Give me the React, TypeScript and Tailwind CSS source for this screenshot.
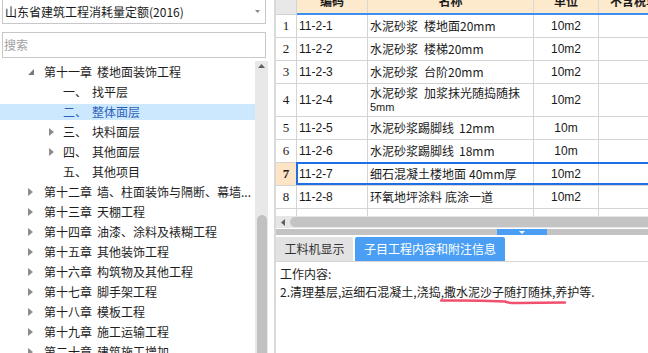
const cjk = "font-['Noto_Sans_CJK_SC','Noto_Sans',sans-serif]"

type TreeItem = {
    child?: boolean
    arrow?: "open" | "closed"
    head: string
    tail: string
    selected?: boolean
}

const treeItems: TreeItem[] = [
    { arrow: "open", head: "第十一章", tail: "楼地面装饰工程" },
    { child: true, head: "一、", tail: "找平层" },
    { child: true, head: "二、", tail: "整体面层", selected: true },
    { child: true, arrow: "closed", head: "三、", tail: "块料面层" },
    { child: true, arrow: "closed", head: "四、", tail: "其他面层" },
    { child: true, head: "五、", tail: "其他项目" },
    { arrow: "closed", head: "第十二章", tail: "墙、柱面装饰与隔断、幕墙..." },
    { arrow: "closed", head: "第十三章", tail: "天棚工程" },
    { arrow: "closed", head: "第十四章", tail: "油漆、涂料及裱糊工程" },
    { arrow: "closed", head: "第十五章", tail: "其他装饰工程" },
    { arrow: "closed", head: "第十六章", tail: "构筑物及其他工程" },
    { arrow: "closed", head: "第十七章", tail: "脚手架工程" },
    { arrow: "closed", head: "第十八章", tail: "模板工程" },
    { arrow: "closed", head: "第十九章", tail: "施工运输工程" },
    { arrow: "closed", head: "第二十章", tail: "建筑施工增加" },
]

type Row = { n: number; code: string; name: string; gap?: number; rest?: string; unit: string; tall?: boolean }

const rows: Row[] = [
    { n: 1, code: "11-2-1", name: "水泥砂浆", gap: 6, rest: "楼地面20mm", unit: "10m2" },
    { n: 2, code: "11-2-2", name: "水泥砂浆", gap: 6, rest: "楼梯20mm", unit: "10m2" },
    { n: 3, code: "11-2-3", name: "水泥砂浆", gap: 6, rest: "台阶20mm", unit: "10m2" },
    { n: 4, code: "11-2-4", name: "水泥砂浆", gap: 6, rest: "加浆抹光随捣随抹", unit: "10m2", tall: true },
    { n: 5, code: "11-2-5", name: "水泥砂浆踢脚线", gap: 5, rest: "12mm", unit: "10m" },
    { n: 6, code: "11-2-6", name: "水泥砂浆踢脚线", gap: 5, rest: "18mm", unit: "10m" },
    { n: 7, code: "11-2-7", name: "细石混凝土楼地面", gap: 3, rest: "40mm厚", unit: "10m2" },
    { n: 8, code: "11-2-8", name: "环氧地坪涂料", gap: 3, rest: "底涂一道", unit: "10m2" },
    { n: 9, code: "11-2-9", name: "环氧地坪涂料", gap: 3, rest: "面涂二道", unit: "10m2" },
]

const TreeRow = ({ item }: { item: TreeItem }) => (
    <div className="h-[20px] flex items-center">
        <div className={`flex items-center w-full h-[16px] ${item.selected ? "bg-[#cce8ff] text-[#2b62b8]" : "text-[#1e1e1e]"}`}>
            <div className={`${item.child ? "w-[63px] pl-[49px]" : "w-[44px] pl-[28px]"} flex items-center shrink-0`}>
                {item.arrow === "open" && (
                    <svg width="6" height="6" viewBox="0 0 6 6"><polygon points="6,0 6,6 0,6" fill="#7a7a7a" /></svg>
                )}
                {item.arrow === "closed" && (
                    <svg width="5" height="8" viewBox="0 0 5 8"><polygon points="0,0 5,4 0,8" fill="#8c8c8c" /></svg>
                )}
            </div>
            <span className="whitespace-nowrap">{item.head}</span>
            <span className="whitespace-nowrap ml-[5px]">{item.tail}</span>
        </div>
    </div>
)

const TableRow = ({ row }: { row: Row }) => {
    const sel = row.n === 7
    const cut = row.n === 9 ? "pt-[5px]" : ""
    return (
        <div className={`relative flex border-b border-[#d4d4d4] ${row.tall ? "h-[33px]" : "h-[23px]"}`}>
            <div className={`w-[21px] shrink-0 border-r border-[#d4d4d4] flex items-center justify-center font-['Liberation_Serif',serif] text-[13px] ${cut} ${sel ? "bg-[#fde4c4] font-bold" : ""}`}>
                {row.n}
            </div>
            <div className={`w-[71px] shrink-0 border-r border-[#d4d4d4] flex items-center pl-[2px] font-['Liberation_Sans',sans-serif] text-[12px] ${cut}`}>
                {row.code}
            </div>
            <div className={`w-[166px] shrink-0 border-r border-[#d4d4d4] flex items-center pl-[2px] text-[12px] ${cut}`}>
                {row.tall ? (
                    <div className="leading-[15px]">
                        <div>
                            {row.name}
                            <span style={{ marginLeft: row.gap }}>{row.rest}</span>
                        </div>
                        <div className="text-[11px] font-['Liberation_Sans',sans-serif]">5mm</div>
                    </div>
                ) : (
                    <div className="whitespace-nowrap">
                        {row.name}
                        <span style={{ marginLeft: row.gap }}>{row.rest}</span>
                    </div>
                )}
            </div>
            <div className={`w-[65px] shrink-0 border-r border-[#d4d4d4] flex items-center justify-center font-['Liberation_Sans',sans-serif] text-[12px] ${cut}`}>
                {row.unit}
            </div>
            <div className="flex-1" />
            {sel && <div className="absolute left-[20px] -top-px -right-[2px] bottom-0 border-2 border-[#1e6ee6]" />}
        </div>
    )
}

export default function App() {
    return (
        <div className={`w-[648px] h-[353px] flex overflow-hidden bg-white text-[12px] text-[#1a1a1a] ${cjk}`}>
            {/* left: quota library tree */}
            <div className="w-[268px] shrink-0 flex flex-col">
                <div className="mx-[2px] h-[24px] border border-t-0 border-[#c8c8c8] flex items-center pl-[2px] pr-[5px]">
                    <span className="whitespace-nowrap">山东省建筑工程消耗量定额(2016)</span>
                    <svg className="ml-auto" width="5" height="3" viewBox="0 0 5 3"><polygon points="0,0 5,0 2.5,3" fill="#8a8a8a" /></svg>
                </div>
                <div className="mx-[2px] mt-[8px] h-[26px] border border-[#c8c8c8] flex items-center pl-[1px] text-[#a0a0a0]">
                    搜索
                </div>
                <div className="mt-[3px] flex flex-1 min-h-0">
                    <div className="w-[255px] pt-px overflow-hidden">
                        {treeItems.map((item) => (
                            <TreeRow key={item.head + item.tail} item={item} />
                        ))}
                    </div>
                    <div className="w-[13px] bg-[#e8e8e8] flex flex-col items-center justify-between">
                        <svg className="mt-[3px]" width="7" height="4" viewBox="0 0 7 4"><polygon points="3.5,0 7,4 0,4" fill="#606060" /></svg>
                        <div className="w-[10px] h-[138px] rounded-t-full bg-[#c1c1c1]" />
                    </div>
                </div>
            </div>

            <div className="w-[6px] shrink-0" />

            {/* right: item table + details */}
            <div className="flex-1 flex flex-col border-l-2 border-[#d9d9d9] min-w-0">
                <div className="h-[216px] overflow-hidden">
                    <div className="flex h-[15px]">
                        <div className="w-[21px] shrink-0 bg-[#e8e8e8] border-r border-b border-[#d4d4d4]" />
                        <div className="flex flex-1 bg-[#fde9cc] border-b-2 border-[#3d8ef0] font-bold overflow-hidden leading-[14px]">
                            <div className="w-[71px] shrink-0 border-r border-[#d8d8d8] text-center"><div className="-mt-[6px]">编码</div></div>
                            <div className="w-[166px] shrink-0 border-r border-[#d8d8d8] text-center"><div className="-mt-[6px]">名称</div></div>
                            <div className="w-[65px] shrink-0 border-r border-[#d8d8d8] text-center"><div className="-mt-[6px]">单位</div></div>
                            <div className="flex-1 pl-[11px] whitespace-nowrap"><div className="-mt-[6px]">不含税单价</div></div>
                        </div>
                    </div>
                    {rows.map((row) => (
                        <TableRow key={row.n} row={row} />
                    ))}
                </div>

                <div className="h-[12px] bg-[#e6e6e6] flex items-center">
                    <div className="w-[14px] shrink-0 flex justify-center">
                        <svg width="4" height="7" viewBox="0 0 4 7"><polygon points="4,0 4,7 0,3.5" fill="#606060" /></svg>
                    </div>
                    <div className="flex-1 h-[10px] rounded-l-full bg-[#c4c4c4]" />
                </div>
                <div className="h-px" />
                <div className="h-[6px] bg-[#c3c3c3] flex">
                    <div className="ml-[221px] w-[50px] bg-[#4a9ff5] flex justify-center items-center">
                        <svg width="6" height="3" viewBox="0 0 6 3"><polygon points="0,0 6,0 3,3" fill="#ffffff" /></svg>
                    </div>
                </div>
                <div className="h-[2px]" />

                <div className="h-[25px] border-b border-[#d6d6d6] flex gap-[2px]">
                    <div className="w-[77px] bg-[#e2e2e2] rounded-t-[2px] flex items-center justify-center text-[#333]">工料机显示</div>
                    <div className="w-[150px] bg-[#4a9ff5] rounded-t-[2px] flex items-center justify-center text-white">子目工程内容和附注信息</div>
                </div>

                <div className="flex-1 pl-[4px] pt-[3px] leading-[18px] text-[#222]">
                    <div>工作内容:</div>
                    <div className="whitespace-nowrap">
                        2.清理基层,运细石混凝土,浇捣,
                        <span className="relative inline-block">
                            撒水泥沙子随打随抹,养
                            <svg className="absolute left-[-4px] top-[15px] pointer-events-none" width="130" height="7" viewBox="0 0 130 7">
                                <path d="M1 2.5 Q34 2 65 3.5 Q70 5.5 78 5 L125 4.5" fill="none" stroke="#f0506e" strokeWidth="2.5" strokeLinecap="round" />
                            </svg>
                        </span>
                        护等.
                    </div>
                </div>
            </div>
        </div>
    )
}
